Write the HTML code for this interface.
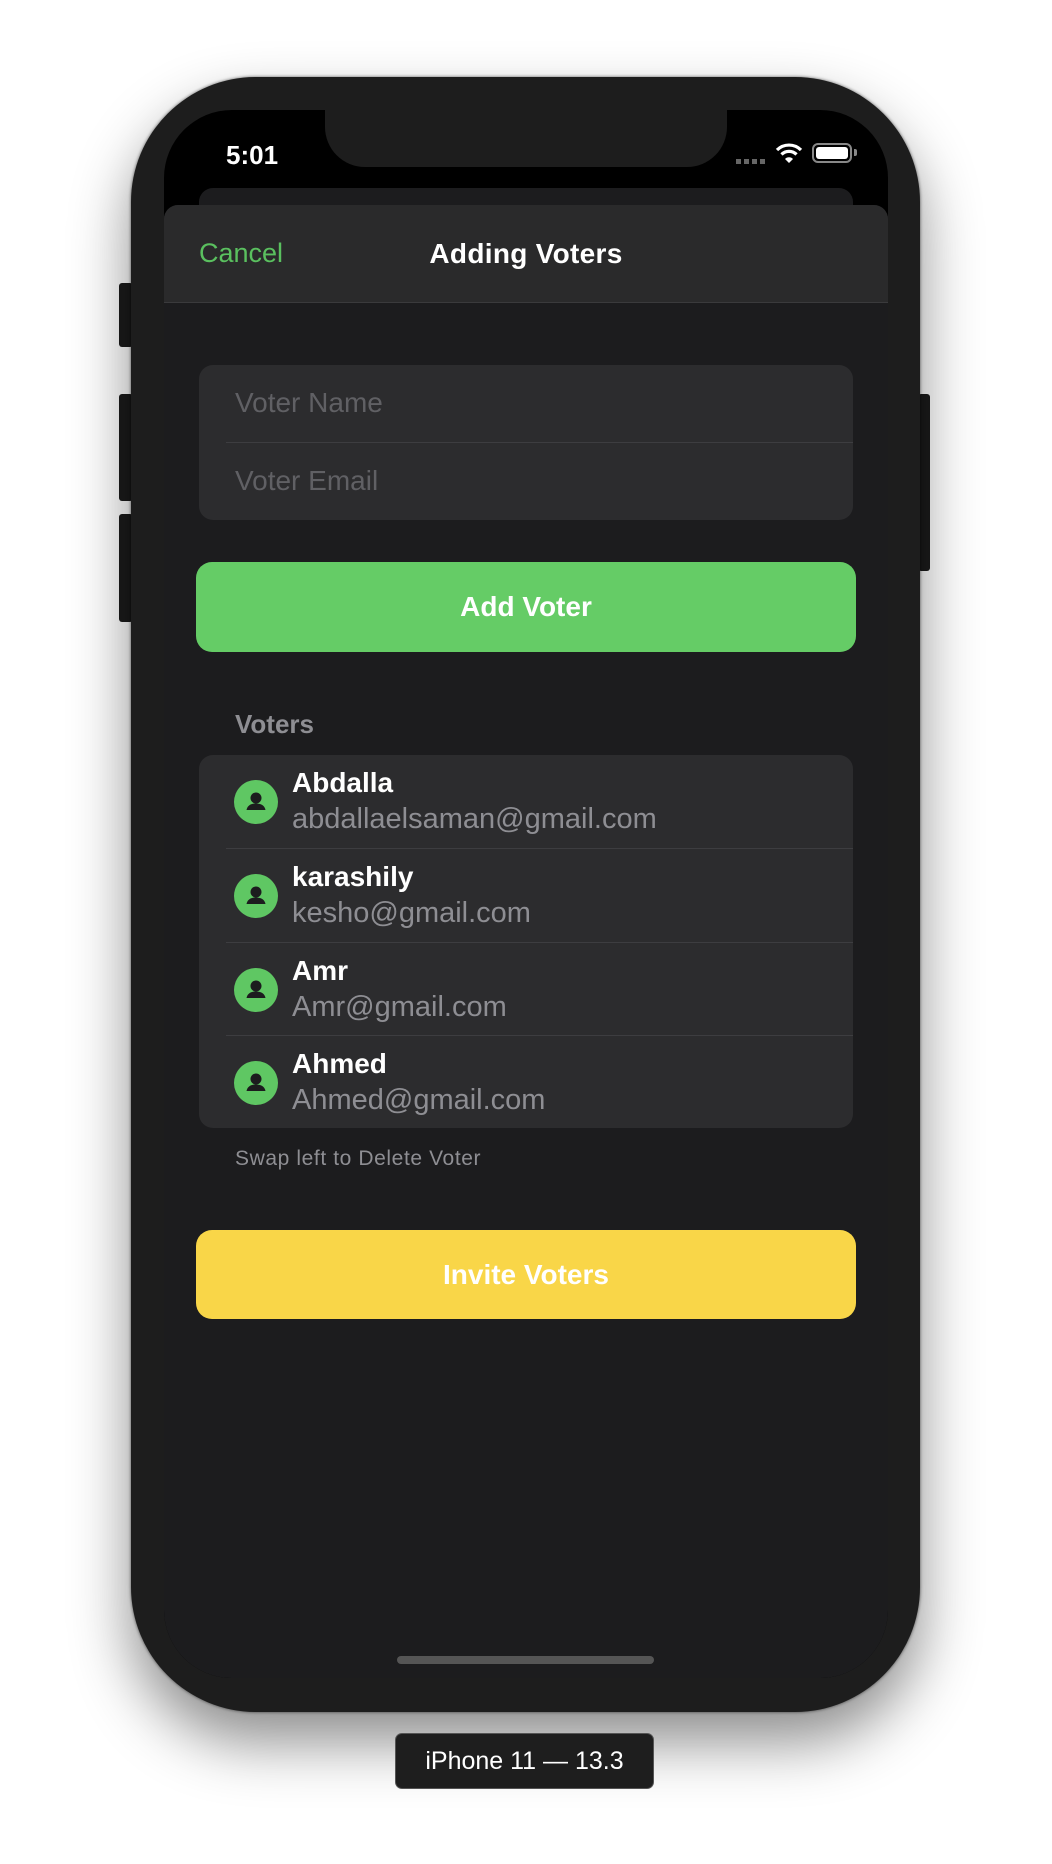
<!DOCTYPE html>
<html><head><style>
*{margin:0;padding:0;box-sizing:border-box}
body{width:1052px;height:1864px;background:#fff;position:relative;font-family:"Liberation Sans",sans-serif;overflow:hidden}
.abs{position:absolute}
.phone{left:131px;top:77px;width:789px;height:1635px;border-radius:125px;background:#1d1d1d;box-shadow:0 30px 60px rgba(0,0,0,.45),0 0 3px rgba(0,0,0,.6)}
.btn{background:#1b1b1b;border-radius:3px}
.screen{left:164px;top:110px;width:724px;height:1568px;border-radius:68px;background:#000;overflow:hidden}
.t{position:absolute;white-space:nowrap}
.nm{color:#fff;font-size:28px;font-weight:bold}
.em{color:#8e8e93;font-size:29px}
</style></head><body>
<div class="abs btn" style="left:119px;top:283px;width:14px;height:64px"></div>
<div class="abs btn" style="left:119px;top:394px;width:14px;height:107px"></div>
<div class="abs btn" style="left:119px;top:514px;width:14px;height:108px"></div>
<div class="abs btn" style="left:918px;top:394px;width:12px;height:177px"></div>
<div class="abs phone"></div>
<div class="abs screen">
  <div class="abs" style="left:161px;top:0;width:402px;height:57px;background:#1d1d1d;border-radius:0 0 40px 40px"></div>
  <div class="t" style="left:62px;top:30px;color:#fff;font-size:26px;font-weight:bold">5:01</div>
  <div class="abs" style="left:572px;top:49px;width:32px;height:5px;background:repeating-linear-gradient(90deg,#666 0 5px,transparent 5px 8px)"></div>
  <svg class="abs" style="left:611px;top:32px" width="28" height="22" viewBox="0 0 28 22"><path d="M2 8a17 17 0 0 1 24 0" stroke="#fff" stroke-width="3.2" fill="none"/><path d="M6.5 12.5a10.5 10.5 0 0 1 15 0" stroke="#fff" stroke-width="3.2" fill="none"/><path d="M10 17l4 4 4-4a5.5 5.5 0 0 0-8 0z" fill="#fff"/></svg>
  <div class="abs" style="left:648px;top:33px;width:40px;height:20px;border:2px solid #888;border-radius:6px;padding:2px"><div style="width:100%;height:100%;background:#fff;border-radius:3px"></div></div>
  <div class="abs" style="left:690px;top:39px;width:3px;height:7px;background:#888;border-radius:0 2px 2px 0"></div>
  <div class="abs" style="left:35px;top:78px;width:654px;height:40px;background:#1c1c1e;border-radius:14px"></div>
  <div class="abs" style="left:0;top:95px;width:724px;height:1500px;background:#1c1c1e;border-radius:14px 14px 0 0;overflow:hidden">
    <div class="abs" style="left:0;top:0;width:724px;height:98px;background:#2a2a2b;border-bottom:1px solid #3a3a3c"></div>
    <div class="t" style="left:35px;top:33px;color:#5ac05f;font-size:27px">Cancel</div>
    <div class="t" style="left:0;width:724px;text-align:center;top:33px;color:#fff;font-size:28px;font-weight:bold;letter-spacing:0.3px">Adding Voters</div>
    <div class="abs" style="left:35px;top:160px;width:654px;height:155px;background:#2c2c2e;border-radius:14px"></div>
    <div class="abs" style="left:62px;top:237px;width:627px;height:1px;background:#3d3d40"></div>
    <div class="t" style="left:71px;top:182px;color:#606064;font-size:28px">Voter Name</div>
    <div class="t" style="left:71px;top:260px;color:#606064;font-size:28px">Voter Email</div>
    <div class="abs" style="left:32px;top:357px;width:660px;height:90px;background:#65cc66;border-radius:16px;color:#fff;font-size:28px;font-weight:bold;text-align:center;line-height:90px">Add Voter</div>
    <div class="t" style="left:71px;top:504px;color:#8e8e93;font-size:26px;font-weight:bold">Voters</div>
    <div class="abs" style="left:35px;top:550px;width:654px;height:373px;background:#2c2c2e;border-radius:14px"></div>
    <div class="abs" style="left:62px;top:643px;width:627px;height:1px;background:#3d3d40"></div>
    <div class="abs" style="left:62px;top:737px;width:627px;height:1px;background:#3d3d40"></div>
    <div class="abs" style="left:62px;top:830px;width:627px;height:1px;background:#3d3d40"></div>
    <div class="abs" style="left:0;top:550px">
      <svg class="abs" style="left:70px;top:25px" width="44" height="44" viewBox="0 0 44 44"><circle cx="22" cy="22" r="22" fill="#5fc763"/><circle cx="22" cy="18" r="5.5" fill="#1c1c1e"/><path d="M12.5 30c1-5 5-6.5 9.5-6.5s8.5 1.5 9.5 6.5z" fill="#1c1c1e"/></svg>
      <div class="t nm" style="left:128px;top:12px">Abdalla</div>
      <div class="t em" style="left:128px;top:48px">abdallaelsaman@gmail.com</div>
    </div>
    <div class="abs" style="left:0;top:644px">
      <svg class="abs" style="left:70px;top:25px" width="44" height="44" viewBox="0 0 44 44"><circle cx="22" cy="22" r="22" fill="#5fc763"/><circle cx="22" cy="18" r="5.5" fill="#1c1c1e"/><path d="M12.5 30c1-5 5-6.5 9.5-6.5s8.5 1.5 9.5 6.5z" fill="#1c1c1e"/></svg>
      <div class="t nm" style="left:128px;top:12px">karashily</div>
      <div class="t em" style="left:128px;top:48px">kesho@gmail.com</div>
    </div>
    <div class="abs" style="left:0;top:738px">
      <svg class="abs" style="left:70px;top:25px" width="44" height="44" viewBox="0 0 44 44"><circle cx="22" cy="22" r="22" fill="#5fc763"/><circle cx="22" cy="18" r="5.5" fill="#1c1c1e"/><path d="M12.5 30c1-5 5-6.5 9.5-6.5s8.5 1.5 9.5 6.5z" fill="#1c1c1e"/></svg>
      <div class="t nm" style="left:128px;top:12px">Amr</div>
      <div class="t em" style="left:128px;top:48px">Amr@gmail.com</div>
    </div>
    <div class="abs" style="left:0;top:831px">
      <svg class="abs" style="left:70px;top:25px" width="44" height="44" viewBox="0 0 44 44"><circle cx="22" cy="22" r="22" fill="#5fc763"/><circle cx="22" cy="18" r="5.5" fill="#1c1c1e"/><path d="M12.5 30c1-5 5-6.5 9.5-6.5s8.5 1.5 9.5 6.5z" fill="#1c1c1e"/></svg>
      <div class="t nm" style="left:128px;top:12px">Ahmed</div>
      <div class="t em" style="left:128px;top:48px">Ahmed@gmail.com</div>
    </div>
    <div class="t" style="left:71px;top:942px;color:#8e8e93;font-size:21px;letter-spacing:0.6px">Swap left to Delete Voter</div>
    <div class="abs" style="left:32px;top:1025px;width:660px;height:89px;background:#f9d648;border-radius:16px;color:#fff;font-size:28px;font-weight:bold;text-align:center;line-height:89px">Invite Voters</div>
  </div>
  <div class="abs" style="left:233px;top:1546px;width:257px;height:8px;background:#555;border-radius:4px"></div>
</div>
<div class="abs" style="left:395px;top:1733px;width:259px;height:56px;background:#1e1e1e;border-radius:7px;border:1px solid #555;color:#fff;font-size:25px;text-align:center;line-height:54px">iPhone 11 — 13.3</div>
</body></html>
